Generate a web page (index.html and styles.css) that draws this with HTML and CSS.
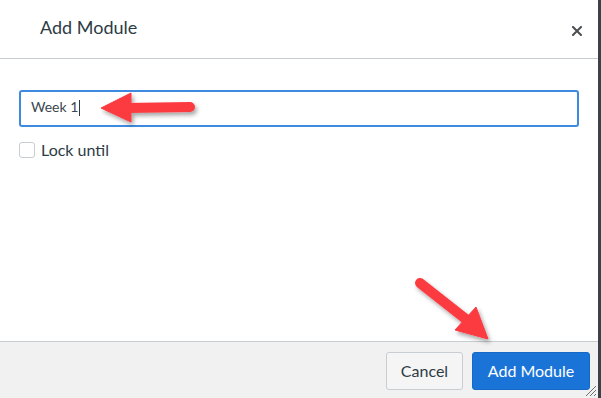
FILE: index.html
```html
<!DOCTYPE html>
<html>
<head>
    <meta charset="utf-8" />
    <title>Add Module</title>
    <link rel="stylesheet" href="styles.css">
</head>
<body>
    <div class="dialog">
        <div class="dialogHeader">
            <h2 class="dialogTitle">Add Module</h2>
            <svg class="closeIcon" width="10" height="10" viewBox="0 0 10 10">
                <path d="M1 1 L9 9 M9 1 L1 9" stroke="#4a4f54" stroke-width="2" stroke-linecap="square" />
            </svg>
        </div>

        <div class="dialogBody">
            <div class="textField">
                <span>Week 1</span><span class="caret"></span>
            </div>
            <label class="lockRow">
                <span class="checkBox"></span>
                Lock until
            </label>
        </div>

        <div class="dialogFooter">
            <button class="btnCancel">Cancel</button>
            <button class="btnPrimary">Add Module</button>
        </div>

        <svg class="grip" width="12" height="12" viewBox="0 0 12 12">
            <path d="M1 11 L11 1 M5 11 L11 5 M9 11 L11 9" stroke="#6b7075" stroke-width="1" />
        </svg>

        <!-- red pointer arrows drawn over the dialog -->
        <svg class="arrows" width="598" height="398" viewBox="0 0 598 398">
            <defs>
                <filter id="shadow" x="-20%" y="-20%" width="140%" height="160%">
                    <feDropShadow dx="2" dy="3" stdDeviation="2" flood-color="#000" flood-opacity="0.35" />
                </filter>
            </defs>
            <g filter="url(#shadow)" fill="#fb3a41" stroke="#fb3a41">
                <line x1="190" y1="107" x2="126" y2="108" stroke-width="10" stroke-linecap="round" />
                <polygon points="101,108 131,93 131,122" stroke-width="1" stroke-linejoin="round" />

                <line x1="420" y1="283" x2="467" y2="320" stroke-width="10" stroke-linecap="round" />
                <polygon points="488,339 455,330 476,307" stroke-width="1" stroke-linejoin="round" />
            </g>
        </svg>
    </div>
</body>
</html>
```

FILE: styles.css
```css
body {
    margin: 0;
    background: #39414a;
    font-family: Lato, "Liberation Sans", sans-serif;
    color: #2d3b45;
}

.dialog {
    position: relative;
    width: 598px;
    height: 398px;
    background: #fff;
    display: flex;
    flex-direction: column;
    overflow: hidden;
}

.dialogHeader {
    height: 59px;
    box-sizing: border-box;
    border-bottom: 1px solid #c7cdd1;
    display: flex;
    align-items: center;
    padding: 0 16px 5px 40px;
    flex-shrink: 0;
}

.dialogTitle {
    margin: 0;
    font-size: 18px;
    font-weight: normal;
    line-height: 22px;
    color: #2d3b45;
}

.closeIcon {
    margin-left: auto;
    margin-top: 8px;
}

.dialogBody {
    flex: 1;
    padding: 31px 19px 0 19px;
}

.textField {
    height: 37px;
    box-sizing: border-box;
    border: 2px solid #3d8ae0;
    border-radius: 3px;
    padding: 0 10px 4px 10px;
    display: flex;
    align-items: center;
    font-size: 14px;
    color: #3b4750;
}

.caret {
    display: inline-block;
    width: 1px;
    height: 16px;
    margin-left: 1px;
    margin-top: 2px;
    background: #2d3b45;
}

.lockRow {
    display: flex;
    align-items: center;
    gap: 6px;
    margin-top: 15px;
    font-size: 16px;
    line-height: 16px;
}

.checkBox {
    width: 16px;
    height: 16px;
    box-sizing: border-box;
    border: 1px solid #c7cdd1;
    border-radius: 3px;
    background: #fff;
}

.dialogFooter {
    flex-shrink: 0;
    height: 57px;
    box-sizing: border-box;
    border-top: 1px solid #c7cdd1;
    background: #f1f1f1;
    display: flex;
    justify-content: flex-end;
    align-items: flex-start;
    gap: 9px;
    padding: 10px 8px 0 0;
}

.btnCancel,
.btnPrimary {
    height: 38px;
    padding: 0;
    border-radius: 3px;
    font-family: Lato, "Liberation Sans", sans-serif;
    font-size: 16px;
    line-height: 20px;
    cursor: pointer;
}

.btnCancel {
    width: 77px;
    background: #f5f5f5;
    border: 1px solid #c7cdd1;
    color: #2d3b45;
}

.btnPrimary {
    width: 118px;
    background: #1a74d8;
    border: 1px solid #1569c7;
    color: #fff;
}

.grip {
    position: absolute;
    right: 1px;
    bottom: 1px;
}

.arrows {
    position: absolute;
    left: 0;
    top: 0;
    pointer-events: none;
}
```
